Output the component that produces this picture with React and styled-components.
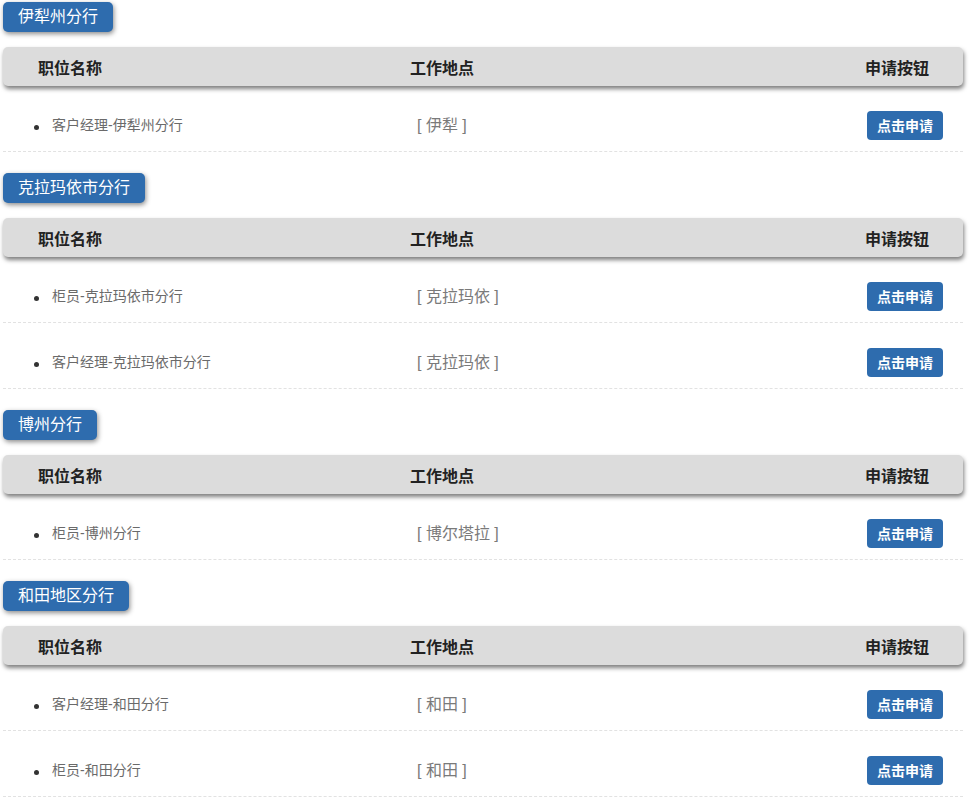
import React from "react";
import styled, { createGlobalStyle } from "styled-components";

const GlobalStyle = createGlobalStyle`
  body {
    margin: 0;
    background: #fff;
    font-family: "Liberation Sans", "Noto Sans CJK SC", sans-serif;
  }
`;

const BRANCHES = [
  {
    name: "伊犁州分行",
    jobs: [{ title: "客户经理-伊犁州分行", place: "伊犁" }],
  },
  {
    name: "克拉玛依市分行",
    jobs: [
      { title: "柜员-克拉玛依市分行", place: "克拉玛依" },
      { title: "客户经理-克拉玛依市分行", place: "克拉玛依" },
    ],
  },
  {
    name: "博州分行",
    jobs: [{ title: "柜员-博州分行", place: "博尔塔拉" }],
  },
  {
    name: "和田地区分行",
    jobs: [
      { title: "客户经理-和田分行", place: "和田" },
      { title: "柜员-和田分行", place: "和田" },
    ],
  },
];

const App = () => {
  return (
    <Page>
      <GlobalStyle />
      {BRANCHES.map((branch) => (
        <Section key={branch.name}>
          <Tag>{branch.name}</Tag>
          <Header>
            <span>职位名称</span>
            <span>工作地点</span>
            <span>申请按钮</span>
          </Header>
          {branch.jobs.map((job) => (
            <Row key={job.title}>
              <JobTitle>{job.title}</JobTitle>
              <Place>[ {job.place} ]</Place>
              <ApplyButton>点击申请</ApplyButton>
            </Row>
          ))}
        </Section>
      ))}
    </Page>
  );
};

const Page = styled.div`
  width: 960px;
  padding: 1px 0 0 3px;
`;

const Section = styled.section`
  & + & {
    margin-top: 20px;
  }
`;

const Tag = styled.div`
  display: inline-block;
  height: 30px;
  line-height: 29px;
  padding: 0 15px;
  margin-top: 1px;
  margin-bottom: 15px;
  background: #2e6cae;
  color: #fff;
  font-size: 16px;
  border-radius: 5px;
  box-shadow: 1px 2px 5px rgba(0, 0, 0, 0.45);
`;

const Header = styled.div`
  display: grid;
  grid-template-columns: 372px 1fr auto;
  align-items: center;
  height: 39px;
  padding: 0 34px 0 35px;
  background: #dcdcdc;
  border-radius: 5px;
  box-shadow: 1px 3px 4px rgba(0, 0, 0, 0.5);
  font-size: 16px;
  font-weight: bold;
  color: #222;
`;

const Row = styled.div`
  display: grid;
  grid-template-columns: 407px 1fr auto;
  align-items: center;
  height: 52px;
  margin-top: 13px;
  padding-right: 20px;
  border-bottom: 1px dashed #e2e2e2;
`;

const JobTitle = styled.div`
  position: relative;
  margin-top: -3px;
  padding-left: 49px;
  font-size: 14px;
  color: #6a6a6a;

  &::before {
    content: "";
    position: absolute;
    left: 31px;
    top: 50%;
    width: 5px;
    height: 5px;
    margin-top: 1px;
    border-radius: 50%;
    background: #333;
  }
`;

const Place = styled.div`
  margin-top: -3px;
  padding-left: 7px;
  font-size: 16px;
  color: #7a7a7a;
`;

const ApplyButton = styled.button`
  width: 76px;
  height: 29px;
  padding: 0;
  border: none;
  border-radius: 4px;
  background: #2e6cae;
  color: #fff;
  font-family: inherit;
  font-size: 14px;
  font-weight: bold;
  cursor: pointer;
`;

export default App;
